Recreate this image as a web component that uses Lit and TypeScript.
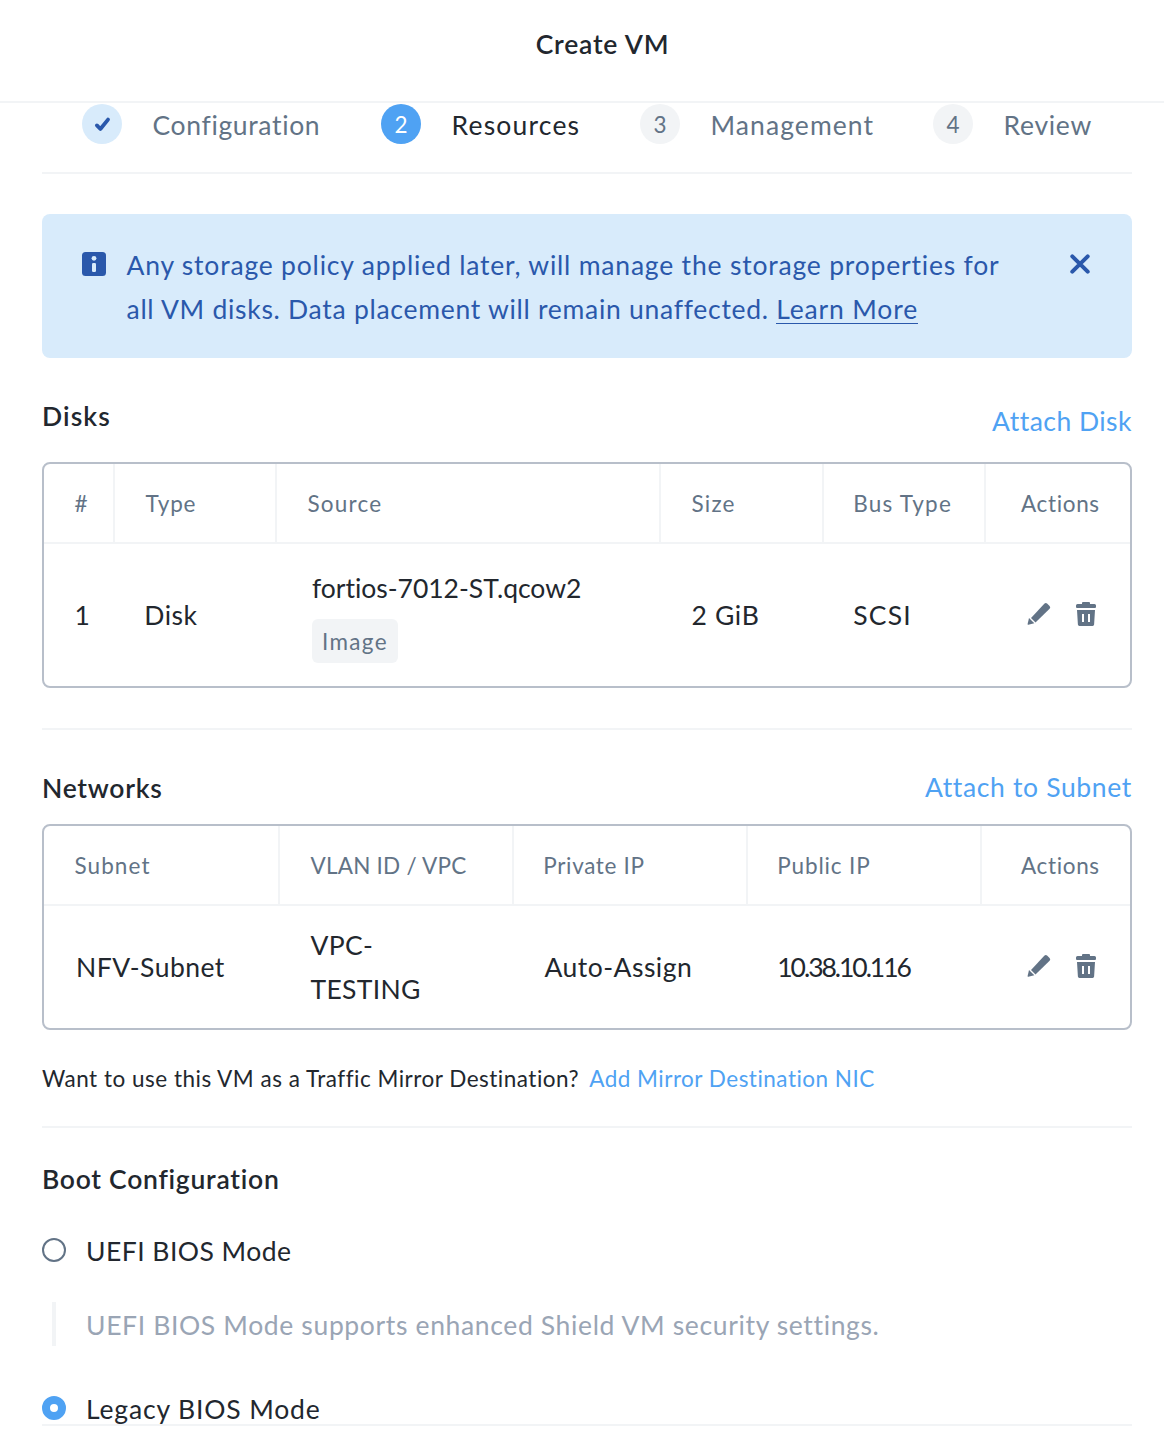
import { LitElement, html, css } from "lit";
import { customElement, property, state } from "lit/decorators.js";
import { classMap } from "lit/directives/class-map.js";

const tracking = css`
  .t-tight { letter-spacing: -0.02px; }
  .t-num { letter-spacing: -2.05px; }
  .t-15 { letter-spacing: 0.22px; }
  .t-30 { letter-spacing: 0.3px; }
  .t-45 { letter-spacing: 0.47px; }
  .t-65 { letter-spacing: 0.65px; }
  .t-75 { letter-spacing: 0.72px; }
  .t-80 { letter-spacing: 0.85px; }
  .t-100 { letter-spacing: 1.08px; }
  .t-120 { letter-spacing: 1.2px; }
  .t-140 { letter-spacing: 1.35px; }
`;

@customElement("row-actions")
class RowActions extends LitElement {
  static styles = css`
    :host { display: flex; gap: 25.5px; align-items: center; color: #627386; }
    svg { display: block; fill: currentColor; }
  `;
  render() {
    return html`
      <svg width="24" height="24" viewBox="0 0 24 24">
        <path d="M4 16.1 17.3 1.7Q18.8.3 20.3 1.7L22.6 4Q23.9 5.4 22.6 6.8L8.5 20.6Z" />
        <path d="M2 15.9 7.3 21.2 1.3 22.8Q.4 23 .6 22.1Z" />
      </svg>
      <svg width="20" height="24" viewBox="0 0 20 24">
        <path d="M6 2V1Q6 0 7 0H13Q14 0 14 1V2H18.5Q20 2 20 3.5V5Q20 6 19 6H1Q0 6 0 5V3.5Q0 2 1.5 2Z" />
        <path fill-rule="evenodd" d="M1 8H19L18.1 22.6Q18 24 16.6 24H3.4Q2 24 1.9 22.6ZM6 12V20H8V12ZM12 12V20H14V12Z" />
      </svg>
    `;
  }
}

@customElement("wizard-step")
class WizardStep extends LitElement {
  @property() label = "";
  @property() number = "";
  @property() status = "todo";
  @property() track = "t-75";
  static styles = [tracking, css`
    :host { display: flex; }
    .dot {
      width: 40px; height: 40px; border-radius: 50%; flex: none;
      display: flex; align-items: center; justify-content: center;
      font-size: 22.5px; line-height: 42px; background: #f2f4f6; color: #627386;
    }
    .dot.active { background: #4fa2f3; color: #fff; }
    .dot.done { background: #d8ebfb; }
    .num { padding-top: 1px; }
    .label { margin: 1px 0 0 30.5px; line-height: 40px; color: #627386; white-space: nowrap; }
    .label.active { color: #22272e; }
  `];
  render() {
    const s = { active: this.status === "active", done: this.status === "done" };
    return html`
      <div class=${classMap({ dot: true, ...s })}>
        ${s.done
          ? html`<svg width="40" height="40" viewBox="0 0 40 40"><path d="M14.9 21.4 18.4 25 26 15.6" fill="none" stroke="#2a58ab" stroke-width="3.8" stroke-linecap="round" stroke-linejoin="round" /></svg>`
          : html`<span class="num">${this.number}</span>`}
      </div>
      <div class=${classMap({ label: true, active: s.active, [this.track]: true })}>${this.label}</div>
    `;
  }
}

@customElement("app-root")
class AppRoot extends LitElement {
  @state() bootMode = "legacy";

  static styles = [tracking, css`
    :host {
      display: block; height: 1450px; overflow: hidden; background: #fff; color: #22272e;
      font-family: Lato, "Liberation Sans", sans-serif; font-size: 26.5px; font-variant-ligatures: none;
      white-space: nowrap;
    }
    .title {
      box-sizing: border-box; height: 103px; border-bottom: 2px solid #f2f4f6;
      padding: 24px 0 0 41px; line-height: 40px; text-align: center; font-weight: 600; letter-spacing: 0.8px;
    }
    .body { height: 1321px; overflow: hidden; padding: 0 32px 0 42px; }
    .steps {
      display: grid; grid-template-columns: 299px 259px 293px auto;
      box-sizing: border-box; height: 71px; padding: 1px 0 0 40px; border-bottom: 2px solid #f2f4f6;
    }
    .banner {
      display: flex; box-sizing: border-box; height: 144px; margin-top: 40px; padding: 29px 40px 0;
      border-radius: 8px; background: #d8ebfb; color: #2a58ab; line-height: 44px;
    }
    .banner svg { display: block; flex: none; margin-top: 9px; }
    .copy { flex: 1; padding-left: 20.5px; }
    .l1 { letter-spacing: 0.8px; }
    .l2 { letter-spacing: 0.72px; }
    .more { letter-spacing: 0.83px; display: inline-block; line-height: 28px; border-bottom: 1px solid #2a58ab; }
    .head { display: flex; justify-content: space-between; box-sizing: border-box; line-height: 40px; }
    .head.disks { height: 104px; padding-top: 38px; }
    .head.nets { height: 94px; padding-top: 37px; }
    .disks .link { margin-top: 5px; }
    .nets h2 { margin-top: 1px; }
    h2 { margin: 0; font-size: 26.5px; font-weight: 600; letter-spacing: 0.74px; }
    .disks h2 { letter-spacing: 1.1px; }
    .link { color: #4fa2f3; }
    .table { border: 2px solid #b8bfca; border-radius: 8px; }
    .row { display: grid; align-items: center; }
    .disk-grid .row { grid-template-columns: 71px 162px 384px 163px 162px 144px; }
    .net-grid .row { grid-template-columns: 236px 234px 234px 234px 148px; }
    .hrow { height: 78px; border-bottom: 2px solid #f2f4f6; color: #627386; font-size: 22.5px; }
    .hrow > div {
      box-sizing: border-box; height: 78px; line-height: 80px; padding-left: 30.5px; border-right: 2px solid #f2f4f6;
    }
    .hrow > div:last-child { border-right: 0; padding-left: 35px; }
    .net-grid .hrow > div:last-child { padding-left: 39px; }
    .brow > div { padding-left: 30.5px; line-height: 44px; }
    .disk-grid .brow { height: 142px; }
    .net-grid .brow { height: 122px; }
    .net-grid .brow > div:first-child { padding-left: 32px; }
    .disk-grid .row > .pull, .net-grid .row > .pull { padding-left: 29.3px; }
    .src { align-self: start; padding-top: 22px; }
    .disk-grid .brow > .src { padding-left: 35px; }
    .chip {
      display: block; box-sizing: border-box; width: 86px; height: 44px; margin-top: 9px; padding-left: 10px;
      border-radius: 6px; background: #f2f4f6; color: #627386; font-size: 22.5px; line-height: 46px;
    }
    row-actions { padding-left: 40.5px; margin-top: -2px; }
    .net-grid row-actions { padding-left: 44.5px; }
    .rule { height: 2px; background: #f2f4f6; }
    .space { height: 40px; }
    .mirror { box-sizing: border-box; height: 96px; padding-top: 29px; line-height: 40px; font-size: 22.5px; display: flex; gap: 10px; }
    .ask { letter-spacing: 0.5px; }
    .add { letter-spacing: 0.49px; }
    .boot { padding: 31px 0 0; line-height: 40px; }
    .radio { display: flex; align-items: center; height: 44px; line-height: 44px; margin-top: 29px; }
    .radio.last { margin-top: 40px; }
    .radio span { margin: 1px 0 0 20px; }
    .knob { box-sizing: border-box; width: 24px; height: 24px; border-radius: 50%; border: 2px solid #627386; }
    .knob.on { border: 8px solid #4fa2f3; }
    .hint {
      margin: 30px 0 0 10px; height: 44px; line-height: 46px; border-left: 4px solid #f2f4f6;
      padding-left: 30px; color: #9aa5b5; letter-spacing: 0.64px;
    }
    .footer { height: 2px; margin: 0 32px 0 42px; background: #f2f4f6; }
  `];

  private knob(mode: string) {
    return html`<div class=${classMap({ knob: true, on: this.bootMode === mode })} @click=${() => (this.bootMode = mode)}></div>`;
  }

  render() {
    return html`
      <div class="title">Create VM</div>
      <div class="body">
        <div class="steps">
          <wizard-step status="done" label="Configuration" track="t-65"></wizard-step>
          <wizard-step status="active" number="2" label="Resources" track="t-120"></wizard-step>
          <wizard-step number="3" label="Management" track="t-100"></wizard-step>
          <wizard-step number="4" label="Review"></wizard-step>
        </div>

        <div class="banner">
          <svg width="24" height="24" viewBox="0 0 24 24">
            <rect width="24" height="24" rx="3.5" fill="#2a58ab" />
            <circle cx="12" cy="6.3" r="2.4" fill="#d8ebfb" />
            <rect x="10" y="11" width="4" height="9" rx="1.2" fill="#d8ebfb" />
          </svg>
          <div class="copy">
            <div class="l1">Any storage policy applied later, will manage the storage properties for</div>
            <div class="l2">all VM disks. Data placement will remain unaffected. <span class="more">Learn More</span></div>
          </div>
          <svg width="24" height="24" viewBox="0 0 24 24">
            <path d="M4.3 4.3 19.7 19.7M19.7 4.3 4.3 19.7" stroke="#2a58ab" stroke-width="4" stroke-linecap="round" />
          </svg>
        </div>

        <div class="head disks">
          <h2>Disks</h2>
          <div class="link t-45">Attach Disk</div>
        </div>
        <div class="table disk-grid">
          <div class="row hrow">
            <div>#</div>
            <div class="t-80">Type</div>
            <div class="t-120">Source</div>
            <div class="t-120">Size</div>
            <div class="t-120 pull">Bus Type</div>
            <div class="t-65">Actions</div>
          </div>
          <div class="row brow">
            <div>1</div>
            <div class="t-45 pull">Disk</div>
            <div class="src"><span class="t-tight">fortios-7012-ST.qcow2</span><span class="chip t-140">Image</span></div>
            <div class="t-65">2 GiB</div>
            <div class="t-120 pull">SCSI</div>
            <row-actions></row-actions>
          </div>
        </div>
        <div class="space"></div>
        <div class="rule"></div>

        <div class="head nets">
          <h2>Networks</h2>
          <div class="link t-65">Attach to Subnet</div>
        </div>
        <div class="table net-grid">
          <div class="row hrow">
            <div class="t-100">Subnet</div>
            <div class="t-15">VLAN ID / VPC</div>
            <div class="t-65 pull">Private IP</div>
            <div class="t-80 pull">Public IP</div>
            <div class="t-65">Actions</div>
          </div>
          <div class="row brow">
            <div class="t-45">NFV-Subnet</div>
            <div class="t-30">VPC-<br />TESTING</div>
            <div class="t-45">Auto-Assign</div>
            <div class="t-num pull">10.38.10.116</div>
            <row-actions></row-actions>
          </div>
        </div>
        <div class="mirror">
          <span class="ask">Want to use this VM as a Traffic Mirror Destination?</span>
          <span class="link add">Add Mirror Destination NIC</span>
        </div>
        <div class="rule"></div>

        <div class="boot">
          <h2>Boot Configuration</h2>
          <div class="radio">${this.knob("uefi")}<span class="t-45">UEFI BIOS Mode</span></div>
          <div class="hint">UEFI BIOS Mode supports enhanced Shield VM security settings.</div>
          <div class="radio last">${this.knob("legacy")}<span class="t-80">Legacy BIOS Mode</span></div>
        </div>
      </div>
      <div class="footer"></div>
    `;
  }
}
